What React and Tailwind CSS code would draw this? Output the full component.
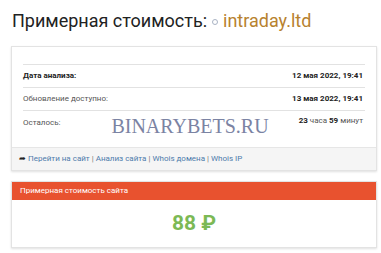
import React from 'react';

const rows = [
  { label: 'Дата анализа:', value: '12 мая 2022, 19:41', bold: true },
  { label: 'Обновление доступно:', value: '13 мая 2022, 19:41' },
];

const App = () => {
  return (
    <div className="w-[381px] h-[253px] bg-white overflow-hidden font-['Roboto',sans-serif] text-[#333]">
      <h1 className="pl-3 pt-[7px] h-[46px] text-[18px] leading-[27px] text-[#222] flex items-center gap-[5px] pb-[12px]">
        <span>Примерная стоимость:</span>
        <span className="w-[6px] h-[6px] rounded-full border border-[#a9b3c4] mt-[3px]"></span>
        <span className="text-[#b7822f]">intraday.ltd</span>
      </h1>

      <div className="relative mx-[11px] w-[366px] border border-[#e3e3e3] shadow-[0_1px_2px_rgba(0,0,0,0.12)]">
        <div className="px-[11px] pt-[17px] pb-[1px]">
          <div className="border-t border-[#e2e2e2]">
            {rows.map((r) => (
              <div key={r.label} className="flex justify-between items-start h-[23px] pt-[6px] border-b border-[#e2e2e2] text-[8px] leading-[10px]">
                <span className={r.bold ? 'font-bold text-[#222]' : 'text-[#555]'}>{r.label}</span>
                <span className="font-bold text-[#222] pr-[2px]">{r.value}</span>
              </div>
            ))}
            <div className="flex justify-between items-start h-[35px] pt-[5px] text-[8px] leading-[10px]">
              <span className="text-[#555] pt-[2px]">Осталось:</span>
              <span className="text-[#555] pr-[2px]">
                <b className="text-[#222]">23</b> часа <b className="text-[#222]">59</b> минут
              </span>
            </div>
          </div>
        </div>
        <div className="absolute left-0 right-0 top-[66px] text-center font-['Liberation_Serif',serif] text-[20px] leading-[26px] text-[#7b83a3] pr-[8px]">
          BINARYBETS.RU
        </div>
        <div className="bg-[#f5f5f5] border-t border-[#e6e6e6] h-[23px] flex items-center px-[7px] text-[8px] text-[#4e7bab]">
          <span className="text-[#222] text-[8px] mr-[2px]">➦</span>
          <span>Перейти на сайт</span>
          <span className="text-[#777] mx-[2px]">|</span>
          <span>Анализ сайта</span>
          <span className="text-[#777] mx-[2px]">|</span>
          <span>Whois домена</span>
          <span className="text-[#777] mx-[2px]">|</span>
          <span>Whois IP</span>
        </div>
      </div>

      <div className="mx-[11px] mt-[10px] w-[366px] border border-[#e3e3e3] shadow-[0_1px_2px_rgba(0,0,0,0.12)]">
        <div className="bg-[#e8522f] h-[18px] flex items-center px-[8px] text-[8px] text-white">
          Примерная стоимость сайта
        </div>
        <div className="h-[47px] flex items-center justify-center text-[21px] font-bold text-[#7cb955]">
          88 ₽
        </div>
      </div>
    </div>
  );
};

export default App;
